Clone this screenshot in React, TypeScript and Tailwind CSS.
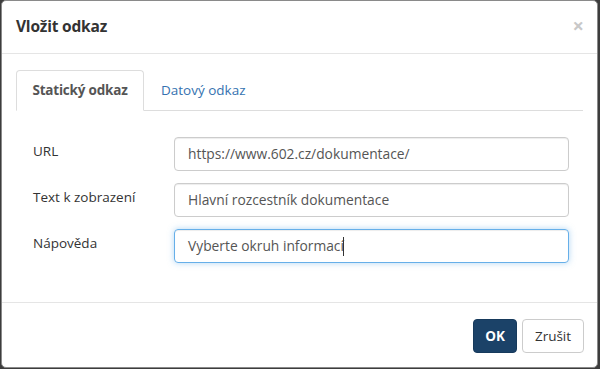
import React from 'react';

const font = { fontFamily: '"Open Sans", "Noto Sans", Arial, sans-serif' };

const fields = [
  { label: 'URL', value: 'https://www.602.cz/dokumentace/' },
  { label: 'Text k zobrazení', value: 'Hlavní rozcestník dokumentace' },
  { label: 'Nápověda', value: 'Vyberte okruh informací', focused: true },
];

export default function App() {
  return (
    <div className="w-[600px] h-[369px] bg-[#3d3d3d] overflow-hidden" style={font}>
      <div className="ml-[1px] w-[597px] h-[368px] bg-white rounded-[5px] border border-[#8a8a8a] flex flex-col">
        {/* header */}
        <div className="h-[53px] shrink-0 flex items-center justify-between pl-[14px] pr-[13px] border-b border-[#e5e5e5]">
          <h4 className="text-[15.5px] font-bold text-[#333] tracking-[-0.2px]">Vložit odkaz</h4>
          <span className="text-[20px] leading-none font-bold text-[#c8c8c8] -mt-[2px]">×</span>
        </div>

        {/* body */}
        <div className="flex-1 px-[14px] pt-[16px]">
          <ul className="flex border-b border-[#dddddd] text-[13.5px] whitespace-nowrap">
            <li className="-mb-px h-[41px] flex items-center justify-center border border-[#dddddd] border-b-white rounded-t-[4px] bg-white font-bold text-[#555] w-[128px] tracking-[-0.2px]">
              Statický odkaz
            </li>
            <li className="h-[40px] pl-[17px] flex items-center text-[#3572b0]">Datový odkaz</li>
          </ul>

          <div className="mt-[26px] flex flex-col gap-[12px] pr-[14px]">
            {fields.map((f) => (
              <div key={f.label} className="flex items-start">
                <label className="w-[158px] pl-[17px] pt-[4px] text-[13.5px] text-[#333]">{f.label}</label>
                <div
                  className={
                    'flex-1 h-[34px] rounded-[4px] border px-[13px] flex items-center text-[13.8px] text-[#555] ' +
                    (f.focused
                      ? 'border-[#66afe9] shadow-[inset_0_1px_1px_rgba(0,0,0,0.075),0_0_6px_rgba(102,175,233,0.5)]'
                      : 'border-[#cccccc] shadow-[inset_0_1px_1px_rgba(0,0,0,0.075)]')
                  }
                >
                  {f.value}
                  {f.focused && <span className="w-px h-[19px] bg-[#333] -ml-[1px]" />}
                </div>
              </div>
            ))}
          </div>
        </div>

        {/* footer */}
        <div className="h-[65px] shrink-0 border-t border-[#e5e5e5] flex items-start justify-end gap-[5px] pt-[16px] pr-[13px]">
          <button className="h-[34px] w-[44px] rounded-[4px] bg-[#1b4268] border border-[#173a5c] text-white font-bold text-[13.5px]">
            OK
          </button>
          <button className="h-[34px] w-[62px] rounded-[4px] bg-white border border-[#cccccc] text-[#333] text-[13.5px]">
            Zrušit
          </button>
        </div>
      </div>
    </div>
  );
}
